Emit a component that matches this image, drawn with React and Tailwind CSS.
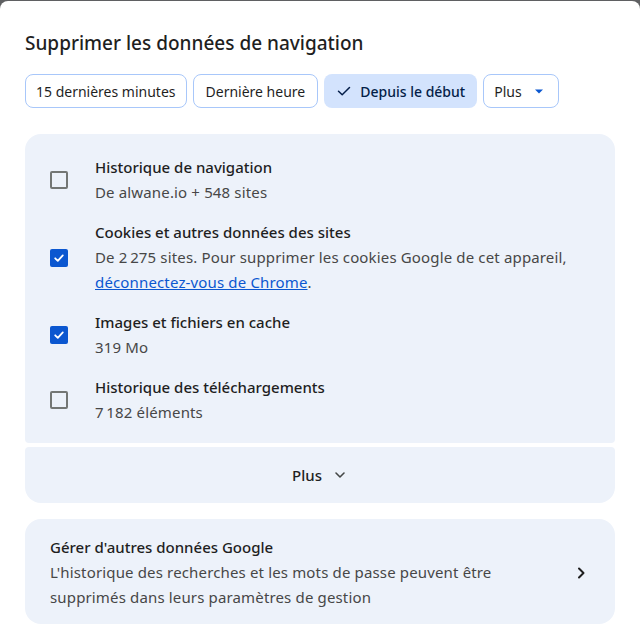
import React from "react";

function Checkbox({ checked }) {
  if (checked) {
    return (
      <div className="w-[18px] h-[18px] rounded-[2px] bg-[#0b57d0] flex items-center justify-center shrink-0">
        <svg width="12" height="12" viewBox="0 0 12 12" fill="none">
          <path d="M2.2 6.3 L4.8 8.8 L9.8 3.4" stroke="white" strokeWidth="1.8" strokeLinecap="round" strokeLinejoin="round" />
        </svg>
      </div>
    );
  }
  return <div className="w-[18px] h-[18px] rounded-[2px] border-2 border-[#747775] shrink-0" />;
}

function Row({ checked, title, children }) {
  return (
    <div className="flex items-center">
      <div className="w-[70px] pl-[25px] flex items-center">
        <Checkbox checked={checked} />
      </div>
      <div className="flex flex-col">
        <div className="text-[15px] leading-[25px] font-medium text-[#1f1f1f]">{title}</div>
        <div className="text-[15px] leading-[25px] text-[#474747] tracking-[0.15px]">{children}</div>
      </div>
    </div>
  );
}

function Chip({ children, selected }) {
  return (
    <div
      className={
        selected
          ? "h-[34px] px-[12px] rounded-[8px] bg-[#d3e3fd] text-[#041e49] text-[14px] font-medium flex items-center gap-[8px]"
          : "h-[34px] px-[10px] rounded-[8px] border border-[#a8c7fa] text-[#1f1f1f] text-[14px] flex items-center gap-[8px]"
      }
    >
      {children}
    </div>
  );
}

export default function App() {
  return (
    <div className="bg-[#5f6062] pt-px w-[640px] h-[638px]" style={{ fontFamily: '"Noto Sans", "Liberation Sans", sans-serif' }}>
      <div className="bg-white rounded-t-[8px] h-[637px] px-[25px] pt-[30px]">
        <h1 className="text-[19px] leading-[24px] font-medium text-[#1f1f1f]">Supprimer les données de navigation</h1>
        <div className="flex gap-[6px] mt-[19px]">
          <Chip>15 dernières minutes</Chip>
          <Chip>
            <span className="px-[2px]">Dernière heure</span>
          </Chip>
          <Chip selected>
            <svg width="16" height="16" viewBox="0 0 16 16" fill="none">
              <path d="M2.5 8.2 L6.2 11.8 L13.5 4.5" stroke="#041e49" strokeWidth="1.5" strokeLinecap="round" strokeLinejoin="round" />
            </svg>
            <span>Depuis le début</span>
          </Chip>
          <Chip>
            <span>Plus</span>
            <svg width="18" height="18" viewBox="0 0 18 18">
              <path d="M5 7.5 L13 7.5 L9 11.5 Z" fill="#0b57d0" />
            </svg>
          </Chip>
        </div>

        <div className="mt-[26px] flex flex-col gap-[4px]">
          <div className="bg-[#edf2fa] rounded-t-[16px] rounded-b-[4px] pt-[21px] pb-[18px] flex flex-col gap-[15px]">
            <Row title="Historique de navigation">De alwane.io + 548 sites</Row>
            <Row checked title="Cookies et autres données des sites">
              De 2&#8239;275 sites. Pour supprimer les cookies Google de cet appareil,
              <br />
              <span className="text-[#0b57d0] underline">déconnectez-vous de Chrome</span>.
            </Row>
            <Row checked title="Images et fichiers en cache">319 Mo</Row>
            <Row title="Historique des téléchargements">7&#8239;182 éléments</Row>
          </div>
          <div className="bg-[#edf2fa] rounded-t-[4px] rounded-b-[16px] h-[56px] flex items-center justify-center gap-[10px]">
            <span className="text-[15px] font-medium text-[#1f1f1f]">Plus</span>
            <svg width="16" height="16" viewBox="0 0 16 16" fill="none">
              <path d="M4 6 L8 10 L12 6" stroke="#444746" strokeWidth="1.6" strokeLinecap="round" strokeLinejoin="round" />
            </svg>
          </div>
        </div>

        <div className="mt-[16px] bg-[#edf2fa] rounded-[16px] pl-[25px] pr-[26px] pt-[16px] pb-[14px] flex items-center">
          <div className="flex-1 flex flex-col">
            <div className="text-[15px] leading-[25px] font-medium text-[#1f1f1f]">Gérer d'autres données Google</div>
            <div className="text-[15px] leading-[25px] text-[#474747] tracking-[0.15px]">
              L'historique des recherches et les mots de passe peuvent être
              <br />
              supprimés dans leurs paramètres de gestion
            </div>
          </div>
          <svg width="16" height="16" viewBox="0 0 16 16" fill="none">
            <path d="M6 3.5 L10.5 8 L6 12.5" stroke="#1f1f1f" strokeWidth="2" strokeLinecap="round" strokeLinejoin="round" />
          </svg>
        </div>
      </div>
    </div>
  );
}
